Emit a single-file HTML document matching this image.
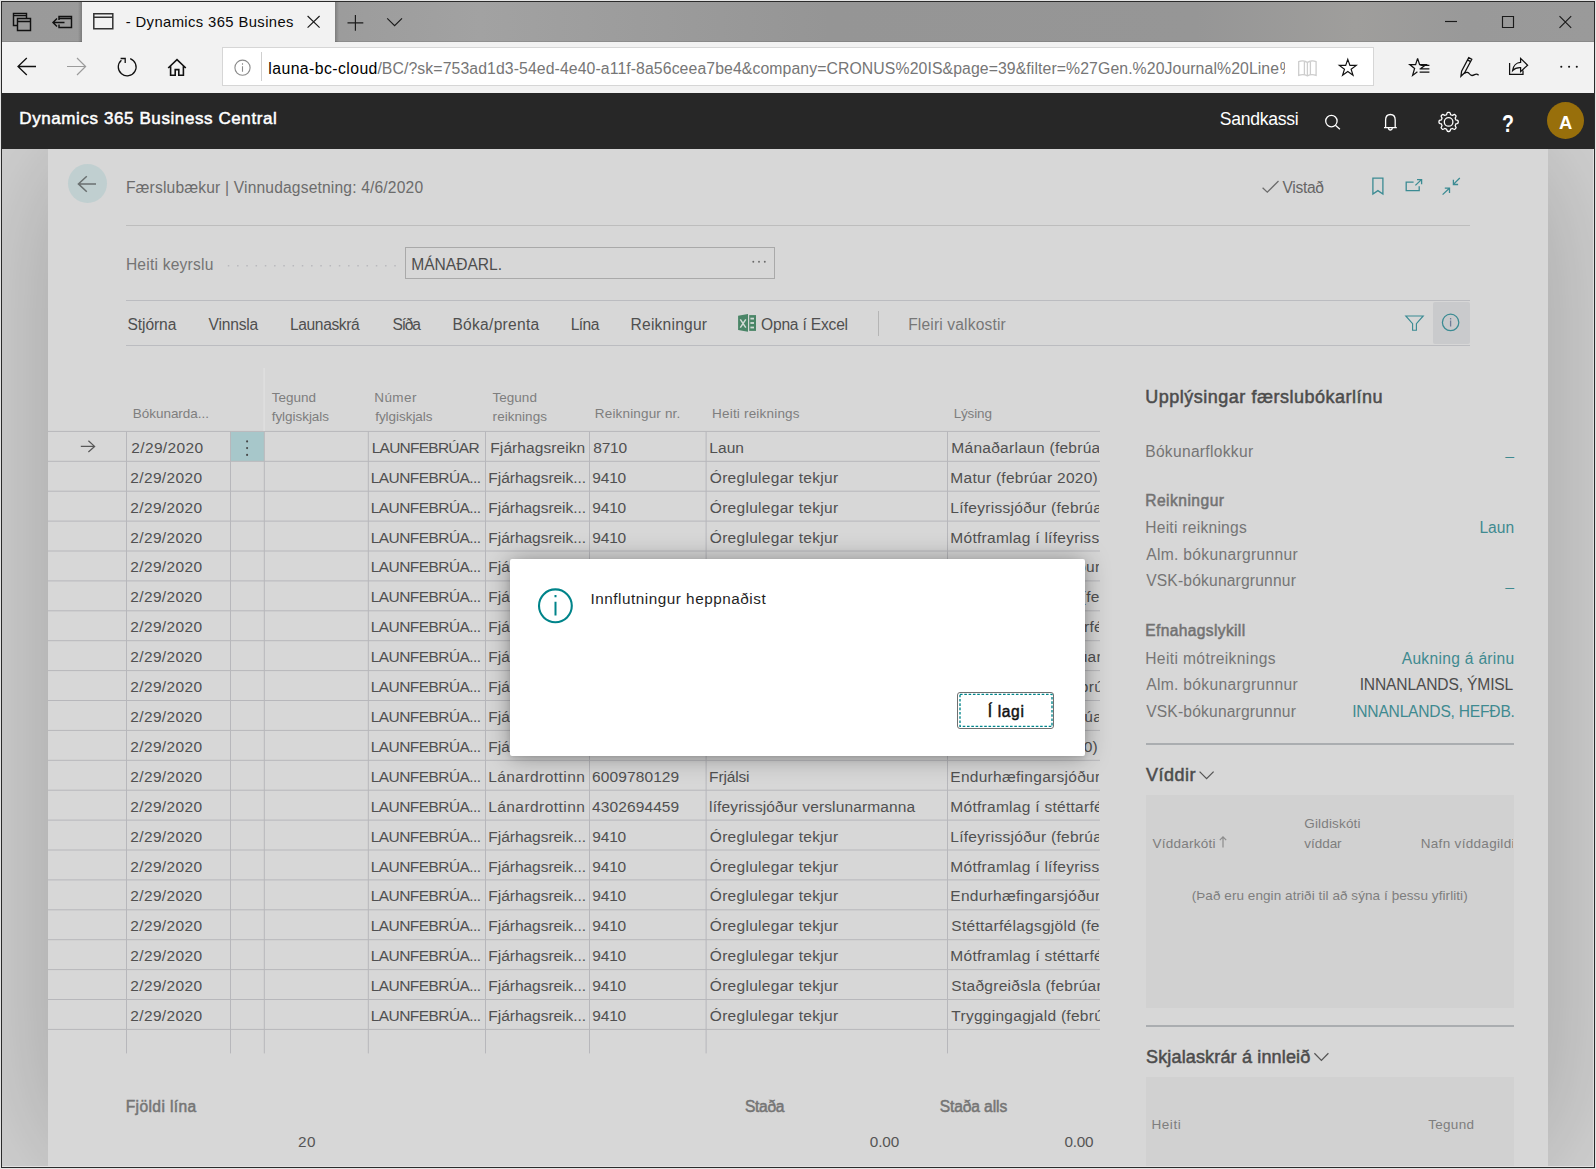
<!DOCTYPE html>
<html lang="is"><head><meta charset="utf-8"><title>Dynamics 365 Business Central</title>
<style>
html,body{margin:0;padding:0}
body{width:1596px;height:1169px;position:relative;overflow:hidden;background:#d7d7d7;font-family:"Liberation Sans",sans-serif;}
.t{position:absolute;white-space:nowrap;line-height:20px;}
.a{position:absolute}
svg{position:absolute;left:0;top:0;overflow:visible}

</style></head>
<body>
<!-- window frame + browser chrome -->
<div class="a" style="left:0;top:0;width:1596px;height:1169px;background:#e4e4e4"></div>
<div class="a" style="left:1px;top:1px;width:1594px;height:1167px;background:#2b2b2b"></div>
<div class="a" style="left:2px;top:2px;width:1592px;height:1165px;background:#d7d7d7"></div>
<div class="a" style="left:2px;top:2px;width:1592px;height:40px;background:linear-gradient(90deg,#9a9a9a 0,#9b9b9b 20%,#a2a2a2 30%,#9c9c9c 40%,#959595 52%,#969696 75%,#9f9e9c 85%,#999 92%,#9a9a9a 100%)"></div>
<div class="a" style="left:2px;top:41px;width:1592px;height:1px;background:rgba(0,0,0,.1)"></div>
<div class="a" style="left:78px;top:2px;width:4px;height:40px;background:linear-gradient(90deg,rgba(0,0,0,0),rgba(0,0,0,.2))"></div>
<div class="a" style="left:335px;top:2px;width:4px;height:40px;background:linear-gradient(90deg,rgba(0,0,0,.2),rgba(0,0,0,0))"></div>
<div class="a" style="left:82px;top:2px;width:253px;height:40px;background:#f2f2f2"></div>
<div class="a" style="left:2px;top:42px;width:1592px;height:51px;background:#f2f2f2"></div>
<div class="a" style="left:222px;top:47px;width:1150px;height:37px;background:#fff;border:1px solid #d6d6d6"></div>
<div class="a" style="left:261px;top:52px;width:1px;height:29px;background:#cfcfcf"></div>
<!-- BC header -->
<div class="a" style="left:2px;top:93px;width:1592px;height:56px;background:#272727"></div>
<div class="a" style="left:1547px;top:102px;width:37px;height:37px;border-radius:50%;background:#986f0b"></div>
<!-- page shadows -->
<div class="a" style="left:2px;top:149px;width:1591px;height:1017px;background:#d3d3d3;overflow:hidden"><div class="a" style="left:46px;top:0;width:1500px;height:1018px;background:#d7d7d7;box-shadow:0 0 140px rgba(0,0,0,.25)"></div></div>
<div class="a" style="left:1593px;top:149px;width:1px;height:1018px;background:#dedede"></div>
<div class="a" style="left:2px;top:1166px;width:1592px;height:1px;background:#e2e2e2"></div>
<!-- page furniture -->
<div class="a" style="left:68px;top:164px;width:39px;height:39px;border-radius:50%;background:#c0cfd0"></div>
<div class="a" style="left:126px;top:225px;width:1344px;height:1px;background:#bdbdbd"></div>
<div class="a" style="left:405px;top:247px;width:368px;height:30px;border:1px solid #a9a9a9"></div>
<div class="a" style="left:126px;top:300px;width:1344px;height:1px;background:#bbbcc0"></div>
<div class="a" style="left:126px;top:345px;width:1344px;height:1px;background:#bbbcc0"></div>
<div class="a" style="left:1433px;top:302px;width:37px;height:42px;background:#c9cacc;border-radius:2px"></div>
<div class="a" style="left:878px;top:311px;width:1px;height:25px;background:#b5b5b5"></div>
<!-- fact box panels -->
<div class="a" style="left:1146px;top:743px;width:368px;height:2px;background:#aaadb0"></div>
<div class="a" style="left:1146px;top:795px;width:368px;height:213px;background:#d1d1d1"></div>
<div class="a" style="left:1146px;top:1025px;width:368px;height:2px;background:#aaadb0"></div>
<div class="a" style="left:1146px;top:1077px;width:368px;height:89px;background:#d1d1d1"></div>
<!-- selected row more-button -->
<div class="a" style="left:231px;top:432px;width:33px;height:29px;background:#a7c7ca"></div>
<svg width="1596" height="1169" viewBox="0 0 1596 1169">
<rect x="48" y="430.90" width="1052" height="1" fill="#b7b7bb"/>
<rect x="48" y="460.80" width="1052" height="1" fill="#b7b7bb"/>
<rect x="48" y="490.70" width="1052" height="1" fill="#b7b7bb"/>
<rect x="48" y="520.60" width="1052" height="1" fill="#b7b7bb"/>
<rect x="48" y="550.50" width="1052" height="1" fill="#b7b7bb"/>
<rect x="48" y="580.40" width="1052" height="1" fill="#b7b7bb"/>
<rect x="48" y="610.30" width="1052" height="1" fill="#b7b7bb"/>
<rect x="48" y="640.20" width="1052" height="1" fill="#b7b7bb"/>
<rect x="48" y="670.10" width="1052" height="1" fill="#b7b7bb"/>
<rect x="48" y="700.00" width="1052" height="1" fill="#b7b7bb"/>
<rect x="48" y="729.90" width="1052" height="1" fill="#b7b7bb"/>
<rect x="48" y="759.80" width="1052" height="1" fill="#b7b7bb"/>
<rect x="48" y="789.70" width="1052" height="1" fill="#b7b7bb"/>
<rect x="48" y="819.60" width="1052" height="1" fill="#b7b7bb"/>
<rect x="48" y="849.50" width="1052" height="1" fill="#b7b7bb"/>
<rect x="48" y="879.40" width="1052" height="1" fill="#b7b7bb"/>
<rect x="48" y="909.30" width="1052" height="1" fill="#b7b7bb"/>
<rect x="48" y="939.20" width="1052" height="1" fill="#b7b7bb"/>
<rect x="48" y="969.10" width="1052" height="1" fill="#b7b7bb"/>
<rect x="48" y="999.00" width="1052" height="1" fill="#b7b7bb"/>
<rect x="48" y="1028.90" width="1052" height="1" fill="#b7b7bb"/>
<rect x="126.00" y="431.4" width="1" height="622" fill="#b7b7bb"/>
<rect x="230.00" y="431.4" width="1" height="622" fill="#b7b7bb"/>
<rect x="263.80" y="431.4" width="1" height="622" fill="#b7b7bb"/>
<rect x="367.80" y="431.4" width="1" height="622" fill="#b7b7bb"/>
<rect x="485.00" y="431.4" width="1" height="622" fill="#b7b7bb"/>
<rect x="589.00" y="431.4" width="1" height="622" fill="#b7b7bb"/>
<rect x="705.60" y="431.4" width="1" height="622" fill="#b7b7bb"/>
<rect x="947.00" y="431.4" width="1" height="622" fill="#b7b7bb"/>
<rect x="263.6" y="368" width="1" height="63" fill="#e3e3e3"/>
</svg>
<!-- dialog -->
<div class="a" style="left:510px;top:559px;width:575px;height:197px;background:#fff;border-radius:2px;box-shadow:0 1px 24px rgba(0,0,0,.36),0 2px 5px rgba(0,0,0,.12);z-index:5"></div>
<div class="a" style="left:957px;top:692px;width:95px;height:35px;border:1px solid #707070;border-radius:3px;background:#fff;z-index:5"></div>
<svg width="1596" height="1169" viewBox="0 0 1596 1169" fill="none" stroke-linecap="butt" stroke-linejoin="miter">
<!-- tab strip icons -->
<g stroke="#111" stroke-width="1.45">
<path d="M17.5 25.5H13.5V13.5H26.5V18.5M13.5 15.6H26.5"/>
<path d="M17.5 18.5H30.5V30.5H17.5ZM17.5 21.4H30.5"/>
<path d="M59 20V16.5H71.5V27.5H59V24.5M59 18.5H71.5M53 22.4H64.5M57 18.4L53 22.4L57 26.4"/>
</g>
<g stroke="#333" stroke-width="1.5"><path d="M93.8 13.8H112.8V28.8H93.8ZM93.8 17.3H112.8"/></g>
<g stroke="#1a1a1a" stroke-width="1.15">
<path d="M307.6 16L319.6 27.6M319.6 16L307.6 27.6"/>
<path d="M347.5 22.9H363.3M355.4 15V30.8"/>
<path d="M387.2 18.3L394.6 25.7L402 18.3"/>
<path d="M1445 21.5H1457"/>
<path d="M1502.5 16.5H1513.5V27.5H1502.5Z"/>
<path d="M1559.5 16.2L1571.2 27.8M1571.2 16.2L1559.5 27.8"/>
</g>
<!-- nav icons -->
<g stroke="#111" stroke-width="1.3">
<path d="M36 66.5H18M26.8 58L18 66.5L26.8 75"/>
<path d="M130.2 58.6A8.9 8.9 0 1 1 121.4 60.2M120.6 58.5H125.2V63.1" />
</g>
<g stroke="#9b9b9b" stroke-width="1.2"><path d="M67 66.5H85.6M77 58L85.6 66.5L77 75"/></g>
<g stroke="#111" stroke-width="1.6"><path d="M168.2 68L177 59.6L185.8 68M170.6 66V75.2H175.2V69.6H178.8V75.2H183.4V66"/></g>
<!-- address bar icons -->
<g stroke="#8a8a8a" stroke-width="1.1"><circle cx="242.5" cy="67.7" r="7.6"/><path d="M242.5 66.2V71.8M242.5 63.2V64.8"/></g>
<g stroke="#cdcdcd" stroke-width="1.3"><path d="M1307.4 62.6V75.6M1307.4 62.6C1305 60.6 1301 60.6 1298.7 61.6V75.4C1301 74.6 1305 74.6 1307.4 75.8C1309.8 74.6 1313.8 74.6 1316.1 75.4V61.6C1313.8 60.6 1309.8 60.6 1307.4 62.6M1304.4 61.2V74.6M1310.4 61.2V74.6"/></g>
<g stroke="#111" stroke-width="1.25" stroke-linejoin="miter">
<path d="M1347.8 58.6L1350.1 65.2H1357L1351.4 69.4L1353.5 76L1347.8 71.9L1342.1 76L1344.2 69.4L1338.6 65.2H1345.5Z" transform="translate(1347.8 67.6) scale(.92) translate(-1347.8 -67.6)"/>
<path d="M1417.6 58.4L1419.6 64.6H1426L1420.8 68.6M1417.6 58.4L1415.6 64.6H1409.8L1414.6 68.4L1412.6 75.4L1417.4 71.8M1420.4 65.4H1429.4M1419.6 68.8H1429.4M1419.6 72.2H1429.4"/>
<path d="M1468.7 57.6L1471.8 59.3L1464.6 72.8L1460.9 76.3L1461.6 71.1ZM1467.5 59.9L1470.6 61.6M1464.4 73.4C1466.6 71.6 1468.4 72.2 1469.6 74C1470.6 75.6 1472.6 75.8 1474.6 74.6C1476.2 73.7 1477.6 74.2 1478.6 75.2"/>
<path d="M1509.6 63V74.4H1523V70.6M1512.6 70.6C1513.2 65.6 1516.6 62.6 1520.6 62.4V58.4L1527.6 65.2L1520.6 71.6V67.6C1517 67.4 1514.6 68.4 1512.6 70.6Z"/>
</g>
<g fill="#111" stroke="none"><circle cx="1561.3" cy="66.8" r="1.05"/><circle cx="1569.1" cy="66.8" r="1.05"/><circle cx="1576.8" cy="66.8" r="1.05"/></g>
</svg>

<svg width="1596" height="1169" viewBox="0 0 1596 1169" fill="none" stroke-linecap="butt" stroke-linejoin="miter">
<!-- header icons -->
<g stroke="#fff" stroke-width="1.3">
<circle cx="1331.4" cy="121.1" r="5.7"/><path d="M1335.4 125.2L1339.9 129.2"/>
<path d="M1384 127.6H1396.8M1385.6 127.6V120C1385.6 116.6 1387.6 114.5 1390.4 114.5C1393.2 114.5 1395.2 116.6 1395.2 120V127.6M1388.4 127.8C1388.6 129.4 1389.4 130 1390.4 130C1391.4 130 1392.2 129.4 1392.4 127.8"/>
<circle cx="1448.6" cy="121.9" r="4.3"/>
<path d="M1448.6 112.3L1449.2 112.3L1449.8 112.5L1450.3 113.5L1450.6 114.6L1451.0 114.8L1451.5 115.0L1451.9 115.2L1452.4 115.3L1453.4 114.8L1454.4 114.4L1454.9 114.7L1455.4 115.1L1455.8 115.6L1456.1 116.1L1455.7 117.1L1455.2 118.1L1455.3 118.6L1455.5 119.0L1455.7 119.5L1455.9 119.9L1457.0 120.2L1458.0 120.7L1458.2 121.3L1458.2 121.9L1458.2 122.5L1458.0 123.1L1457.0 123.6L1455.9 123.9L1455.7 124.3L1455.5 124.8L1455.3 125.2L1455.2 125.7L1455.7 126.7L1456.1 127.7L1455.8 128.2L1455.4 128.7L1454.9 129.1L1454.4 129.4L1453.4 129.0L1452.4 128.5L1451.9 128.6L1451.5 128.8L1451.0 129.0L1450.6 129.2L1450.3 130.3L1449.8 131.3L1449.2 131.5L1448.6 131.5L1448.0 131.5L1447.4 131.3L1446.9 130.3L1446.6 129.2L1446.2 129.0L1445.7 128.8L1445.3 128.6L1444.8 128.5L1443.8 129.0L1442.8 129.4L1442.3 129.1L1441.8 128.7L1441.4 128.2L1441.1 127.7L1441.5 126.7L1442.0 125.7L1441.9 125.2L1441.7 124.8L1441.5 124.3L1441.3 123.9L1440.2 123.6L1439.2 123.1L1439.0 122.5L1439.0 121.9L1439.0 121.3L1439.2 120.7L1440.2 120.2L1441.3 119.9L1441.5 119.5L1441.7 119.0L1441.9 118.6L1442.0 118.1L1441.5 117.1L1441.1 116.1L1441.4 115.6L1441.8 115.1L1442.3 114.7L1442.8 114.4L1443.8 114.8L1444.8 115.3L1445.3 115.2L1445.7 115.0L1446.2 114.8L1446.6 114.6L1446.9 113.5L1447.4 112.5L1448.0 112.3Z" stroke-linejoin="round"/>
</g>
<!-- back arrow -->
<g stroke="#6a7070" stroke-width="1.5"><path d="M96 183.9H78.6M86.8 176.2L78.4 183.9L86.8 191.7"/></g>
<!-- saved check -->
<g stroke="#6c6c6c" stroke-width="1.25"><path d="M1262.6 187.7L1267.3 192.2L1278.5 181"/></g>
<!-- page actions (teal) -->
<g stroke="#3b8b93" stroke-width="1.3">
<path d="M1372.9 178.2H1382.9V194L1377.9 190.6L1372.9 194Z"/>
<path d="M1413.6 182.2H1406.2V190.7H1419.2V186.2M1415.4 185.4L1421.4 179.6M1417 179.6H1421.6V184.2"/>
<path d="M1459.8 178L1453.4 184.4M1453.4 179.8V184.5H1458.1M1442.6 194.6L1449.4 188.2M1444.8 188.1H1449.5V192.9"/>
<path d="M1405.8 316H1423.2L1416.4 323.6V330.2H1412.6V323.6Z" stroke-width="1.15"/>
<circle cx="1450.6" cy="322.4" r="8.2" stroke-width="1.25"/>
</g>
<g stroke="#6f7c96" stroke-width="1.3"><path d="M1450.6 320.6V326.4M1450.6 318V319.5"/></g>
<!-- excel -->
<path d="M738.1 315.7L748 314V331.8L738.1 330.1Z" fill="#4a8567"/>
<rect x="749.2" y="315.1" width="6.8" height="15.8" fill="#4a8567"/>
<g fill="#d3dbd6"><rect x="750.4" y="317.7" width="3.6" height="1.8"/><rect x="750.4" y="322.1" width="3.6" height="1.8"/><rect x="750.4" y="326.6" width="3.6" height="1.8"/></g>
<path d="M740.3 319.4L745.8 327.6M745.8 319.4L740.3 327.6" stroke="#d3dbd6" stroke-width="1.5"/>
<!-- field dots -->
<path d="M227.8 265.8H396" stroke="#b9b9bd" stroke-width="1.5" stroke-dasharray="1.5 7.75"/>
<g fill="#6a6a6a"><circle cx="753.3" cy="261.8" r="0.95"/><circle cx="759" cy="261.8" r="0.95"/><circle cx="764.8" cy="261.8" r="0.95"/></g>
<!-- row arrow + more -->
<g stroke="#585858" stroke-width="1.25"><path d="M80.8 446.4H94.6M88.4 440.8L94.6 446.4L88.4 452"/></g>
<g fill="#474747"><circle cx="247.1" cy="441.4" r="1.05"/><circle cx="247.1" cy="448.1" r="1.05"/><circle cx="247.1" cy="454.9" r="1.05"/></g>
<!-- chevrons, sort arrow -->
<g stroke="#555" stroke-width="1.25"><path d="M1199.6 771.6L1206.6 778.7L1213.6 771.6"/><path d="M1314.4 1053.3L1321.4 1060.4L1328.4 1053.3"/></g>
<g stroke="#8c8c8c" stroke-width="1.2"><path d="M1223 847.6V836.8M1219.8 840.2L1223 836.8L1226.2 840.2"/></g>
</svg>
<svg width="1596" height="1169" viewBox="0 0 1596 1169" fill="none" style="z-index:6">
<circle cx="555.4" cy="605.8" r="16.4" stroke="#00848a" stroke-width="2.1"/>
<path d="M555.5 601.8V615.6M555.5 594.9V597.2" stroke="#00848a" stroke-width="2"/>
<rect x="960" y="694.4" width="92" height="32" stroke="#00848a" stroke-width="1.35" stroke-dasharray="2.6 1.7"/>
</svg>


<!-- text -->
<span class="t" id="t0" style="top:12.00px;font-size:14.8px;color:#0a0a0a;letter-spacing:0.393px;left:125.70px;">- Dynamics 365 Busines</span>
<span class="t" id="t1" style="top:59.00px;font-size:15.8px;color:#000;letter-spacing:0.420px;left:268.30px;">launa-bc-cloud</span>
<span class="t" id="t2" style="top:59.00px;font-size:15.8px;color:#767676;letter-spacing:0.094px;left:377.40px;">/BC/?sk=753ad1d3-54ed-4e40-a11f-8a56ceea7be4&amp;company=CRONUS%20IS&amp;page=39&amp;filter=%27Gen.%20Journal%20Line</span>
<span class="t" id="t3" style="top:59.00px;font-size:15.8px;color:#767676;left:1279.80px;width:5.70px;overflow:hidden;">%27</span>
<span class="t" id="t4" style="top:109.00px;font-size:17px;color:#fff;-webkit-text-stroke:0.5px #fff;letter-spacing:0.591px;left:19.30px;">Dynamics 365 Business Central</span>
<span class="t" id="t5" style="top:109.00px;font-size:17.6px;color:#fff;letter-spacing:-0.283px;left:1219.80px;">Sandkassi</span>
<span class="t" id="t6" style="top:114.00px;font-size:24.5px;color:#fff;font-weight:700;left:1502.40px;transform:scaleX(.8);transform-origin:0 0;">?</span>
<span class="t" id="t7" style="top:113.00px;font-size:18.4px;color:#fff;font-weight:700;left:1559.10px;">A</span>
<span class="t" id="t8" style="top:178.00px;font-size:15.6px;color:#6c6c6c;letter-spacing:0.170px;left:125.90px;">Færslubækur | Vinnudagsetning: 4/6/2020</span>
<span class="t" id="t9" style="top:178.00px;font-size:15.6px;color:#666;letter-spacing:-0.297px;left:1282.40px;">Vistað</span>
<span class="t" id="t10" style="top:255.00px;font-size:15.6px;color:#747474;letter-spacing:0.213px;left:125.90px;">Heiti keyrslu</span>
<span class="t" id="t11" style="top:255.00px;font-size:15.6px;color:#4e4e4e;letter-spacing:-0.006px;left:411.20px;">MÁNAÐARL.</span>
<span class="t" id="t12" style="top:315.00px;font-size:15.6px;color:#4f4f4f;letter-spacing:-0.089px;left:127.50px;">Stjórna</span>
<span class="t" id="t13" style="top:315.00px;font-size:15.6px;color:#4f4f4f;letter-spacing:-0.182px;left:208.50px;">Vinnsla</span>
<span class="t" id="t14" style="top:315.00px;font-size:15.6px;color:#4f4f4f;letter-spacing:-0.381px;left:290.00px;">Launaskrá</span>
<span class="t" id="t15" style="top:315.00px;font-size:15.6px;color:#4f4f4f;letter-spacing:-1.202px;left:392.50px;">Síða</span>
<span class="t" id="t16" style="top:315.00px;font-size:15.6px;color:#4f4f4f;letter-spacing:0.278px;left:452.40px;">Bóka/prenta</span>
<span class="t" id="t17" style="top:315.00px;font-size:15.6px;color:#4f4f4f;letter-spacing:-0.559px;left:570.70px;">Lína</span>
<span class="t" id="t18" style="top:315.00px;font-size:15.6px;color:#4f4f4f;letter-spacing:0.206px;left:630.60px;">Reikningur</span>
<span class="t" id="t19" style="top:315.00px;font-size:15.6px;color:#4f4f4f;letter-spacing:-0.201px;left:761.00px;">Opna í Excel</span>
<span class="t" id="t20" style="top:315.00px;font-size:15.6px;color:#777;letter-spacing:0.146px;left:908.20px;">Fleiri valkostir</span>
<span class="t" id="t21" style="top:404.00px;font-size:13.5px;color:#7e7e7e;letter-spacing:-0.036px;left:132.80px;">Bókunarda...</span>
<span class="t" id="t22" style="top:388.00px;font-size:13.5px;color:#7e7e7e;left:271.70px;">Tegund</span>
<span class="t" id="t23" style="top:407.00px;font-size:13.5px;color:#7e7e7e;letter-spacing:-0.041px;left:271.70px;">fylgiskjals</span>
<span class="t" id="t24" style="top:388.00px;font-size:13.5px;color:#7e7e7e;letter-spacing:0.447px;left:374.20px;">Númer</span>
<span class="t" id="t25" style="top:407.00px;font-size:13.5px;color:#7e7e7e;letter-spacing:-0.041px;left:375.20px;">fylgiskjals</span>
<span class="t" id="t26" style="top:388.00px;font-size:13.5px;color:#7e7e7e;left:492.60px;">Tegund</span>
<span class="t" id="t27" style="top:407.00px;font-size:13.5px;color:#7e7e7e;letter-spacing:0.040px;left:492.60px;">reiknings</span>
<span class="t" id="t28" style="top:404.00px;font-size:13.5px;color:#7e7e7e;letter-spacing:0.166px;left:594.80px;">Reikningur nr.</span>
<span class="t" id="t29" style="top:404.00px;font-size:13.5px;color:#7e7e7e;letter-spacing:0.190px;left:712.10px;">Heiti reiknings</span>
<span class="t" id="t30" style="top:404.00px;font-size:13.5px;color:#7e7e7e;letter-spacing:-0.163px;left:953.70px;">Lýsing</span>
<span class="t" id="t31" style="top:438.00px;font-size:15.5px;color:#505050;letter-spacing:0.346px;left:131.30px;">2/29/2020</span>
<span class="t" id="t32" style="top:438.00px;font-size:15.5px;color:#505050;letter-spacing:-0.752px;left:371.70px;">LAUNFEBRÚAR</span>
<span class="t" id="t33" style="top:438.00px;font-size:15.5px;color:#505050;letter-spacing:0.085px;left:490.30px;">Fjárhagsreikn</span>
<span class="t" id="t34" style="top:438.00px;font-size:15.5px;color:#505050;letter-spacing:-0.254px;left:593.30px;">8710</span>
<span class="t" id="t35" style="top:438.00px;font-size:15.5px;color:#505050;letter-spacing:0.046px;left:709.30px;">Laun</span>
<span class="t" id="t36" style="top:438.00px;font-size:15.5px;color:#505050;left:951.30px;width:147.70px;overflow:hidden;letter-spacing:0.28px;">Mánaðarlaun (febrúar 2020)</span>
<span class="t" id="t37" style="top:468.00px;font-size:15.5px;color:#505050;letter-spacing:0.346px;left:130.30px;">2/29/2020</span>
<span class="t" id="t38" style="top:468.00px;font-size:15.5px;color:#505050;letter-spacing:-0.561px;left:370.70px;">LAUNFEBRÚA...</span>
<span class="t" id="t39" style="top:468.00px;font-size:15.5px;color:#505050;letter-spacing:-0.028px;left:488.30px;">Fjárhagsreik...</span>
<span class="t" id="t40" style="top:468.00px;font-size:15.5px;color:#505050;letter-spacing:-0.187px;left:592.30px;">9410</span>
<span class="t" id="t41" style="top:468.00px;font-size:15.5px;color:#505050;letter-spacing:0.298px;left:709.80px;">Óreglulegar tekjur</span>
<span class="t" id="t42" style="top:468.00px;font-size:15.5px;color:#505050;left:950.30px;width:148.70px;overflow:hidden;letter-spacing:0.28px;">Matur (febrúar 2020)</span>
<span class="t" id="t43" style="top:498.00px;font-size:15.5px;color:#505050;letter-spacing:0.346px;left:130.30px;">2/29/2020</span>
<span class="t" id="t44" style="top:498.00px;font-size:15.5px;color:#505050;letter-spacing:-0.561px;left:370.70px;">LAUNFEBRÚA...</span>
<span class="t" id="t45" style="top:498.00px;font-size:15.5px;color:#505050;letter-spacing:-0.028px;left:488.30px;">Fjárhagsreik...</span>
<span class="t" id="t46" style="top:498.00px;font-size:15.5px;color:#505050;letter-spacing:-0.187px;left:592.30px;">9410</span>
<span class="t" id="t47" style="top:498.00px;font-size:15.5px;color:#505050;letter-spacing:0.298px;left:709.80px;">Óreglulegar tekjur</span>
<span class="t" id="t48" style="top:498.00px;font-size:15.5px;color:#505050;left:950.30px;width:148.70px;overflow:hidden;letter-spacing:0.28px;">Lífeyrissjóður (febrúar 2020)</span>
<span class="t" id="t49" style="top:528.00px;font-size:15.5px;color:#505050;letter-spacing:0.346px;left:130.30px;">2/29/2020</span>
<span class="t" id="t50" style="top:528.00px;font-size:15.5px;color:#505050;letter-spacing:-0.561px;left:370.70px;">LAUNFEBRÚA...</span>
<span class="t" id="t51" style="top:528.00px;font-size:15.5px;color:#505050;letter-spacing:-0.028px;left:488.30px;">Fjárhagsreik...</span>
<span class="t" id="t52" style="top:528.00px;font-size:15.5px;color:#505050;letter-spacing:-0.187px;left:592.30px;">9410</span>
<span class="t" id="t53" style="top:528.00px;font-size:15.5px;color:#505050;letter-spacing:0.298px;left:709.80px;">Óreglulegar tekjur</span>
<span class="t" id="t54" style="top:528.00px;font-size:15.5px;color:#505050;left:950.30px;width:148.70px;overflow:hidden;letter-spacing:0.28px;">Mótframlag í lífeyrissjóð</span>
<span class="t" id="t55" style="top:557.00px;font-size:15.5px;color:#505050;letter-spacing:0.346px;left:130.30px;">2/29/2020</span>
<span class="t" id="t56" style="top:557.00px;font-size:15.5px;color:#505050;letter-spacing:-0.561px;left:370.70px;">LAUNFEBRÚA...</span>
<span class="t" id="t57" style="top:557.00px;font-size:15.5px;color:#505050;letter-spacing:-0.028px;left:488.30px;">Fjárhagsreik...</span>
<span class="t" id="t58" style="top:557.00px;font-size:15.5px;color:#505050;letter-spacing:-0.187px;left:592.30px;">9410</span>
<span class="t" id="t59" style="top:557.00px;font-size:15.5px;color:#505050;letter-spacing:0.298px;left:709.80px;">Óreglulegar tekjur</span>
<span class="t" id="t60" style="top:557.00px;font-size:15.5px;color:#505050;left:950.30px;width:148.70px;overflow:hidden;letter-spacing:0.28px;">Endurhæfingarsjóður</span>
<span class="t" id="t61" style="top:587.00px;font-size:15.5px;color:#505050;letter-spacing:0.346px;left:130.30px;">2/29/2020</span>
<span class="t" id="t62" style="top:587.00px;font-size:15.5px;color:#505050;letter-spacing:-0.561px;left:370.70px;">LAUNFEBRÚA...</span>
<span class="t" id="t63" style="top:587.00px;font-size:15.5px;color:#505050;letter-spacing:-0.028px;left:488.30px;">Fjárhagsreik...</span>
<span class="t" id="t64" style="top:587.00px;font-size:15.5px;color:#505050;letter-spacing:-0.187px;left:592.30px;">9410</span>
<span class="t" id="t65" style="top:587.00px;font-size:15.5px;color:#505050;letter-spacing:0.298px;left:709.80px;">Óreglulegar tekjur</span>
<span class="t" id="t66" style="top:587.00px;font-size:15.5px;color:#505050;left:951.30px;width:148.70px;overflow:hidden;letter-spacing:0.28px;">Stéttarfélagsgjöld (febrúar 2020)</span>
<span class="t" id="t67" style="top:617.00px;font-size:15.5px;color:#505050;letter-spacing:0.346px;left:130.30px;">2/29/2020</span>
<span class="t" id="t68" style="top:617.00px;font-size:15.5px;color:#505050;letter-spacing:-0.561px;left:370.70px;">LAUNFEBRÚA...</span>
<span class="t" id="t69" style="top:617.00px;font-size:15.5px;color:#505050;letter-spacing:-0.028px;left:488.30px;">Fjárhagsreik...</span>
<span class="t" id="t70" style="top:617.00px;font-size:15.5px;color:#505050;letter-spacing:-0.187px;left:592.30px;">9410</span>
<span class="t" id="t71" style="top:617.00px;font-size:15.5px;color:#505050;letter-spacing:0.298px;left:709.80px;">Óreglulegar tekjur</span>
<span class="t" id="t72" style="top:617.00px;font-size:15.5px;color:#505050;left:950.30px;width:148.70px;overflow:hidden;letter-spacing:0.28px;">Mótframlag í stéttarfélag</span>
<span class="t" id="t73" style="top:647.00px;font-size:15.5px;color:#505050;letter-spacing:0.346px;left:130.30px;">2/29/2020</span>
<span class="t" id="t74" style="top:647.00px;font-size:15.5px;color:#505050;letter-spacing:-0.561px;left:370.70px;">LAUNFEBRÚA...</span>
<span class="t" id="t75" style="top:647.00px;font-size:15.5px;color:#505050;letter-spacing:-0.028px;left:488.30px;">Fjárhagsreik...</span>
<span class="t" id="t76" style="top:647.00px;font-size:15.5px;color:#505050;letter-spacing:-0.187px;left:592.30px;">9410</span>
<span class="t" id="t77" style="top:647.00px;font-size:15.5px;color:#505050;letter-spacing:0.298px;left:709.80px;">Óreglulegar tekjur</span>
<span class="t" id="t78" style="top:647.00px;font-size:15.5px;color:#505050;left:951.30px;width:148.70px;overflow:hidden;letter-spacing:0.28px;">Staðgreiðsla (febrúar</span>
<span class="t" id="t79" style="top:677.00px;font-size:15.5px;color:#505050;letter-spacing:0.346px;left:130.30px;">2/29/2020</span>
<span class="t" id="t80" style="top:677.00px;font-size:15.5px;color:#505050;letter-spacing:-0.561px;left:370.70px;">LAUNFEBRÚA...</span>
<span class="t" id="t81" style="top:677.00px;font-size:15.5px;color:#505050;letter-spacing:-0.028px;left:488.30px;">Fjárhagsreik...</span>
<span class="t" id="t82" style="top:677.00px;font-size:15.5px;color:#505050;letter-spacing:-0.187px;left:592.30px;">9410</span>
<span class="t" id="t83" style="top:677.00px;font-size:15.5px;color:#505050;letter-spacing:0.298px;left:709.80px;">Óreglulegar tekjur</span>
<span class="t" id="t84" style="top:677.00px;font-size:15.5px;color:#505050;left:951.30px;width:148.70px;overflow:hidden;letter-spacing:0.28px;">Tryggingagjald (febrúar 2020)</span>
<span class="t" id="t85" style="top:707.00px;font-size:15.5px;color:#505050;letter-spacing:0.346px;left:130.30px;">2/29/2020</span>
<span class="t" id="t86" style="top:707.00px;font-size:15.5px;color:#505050;letter-spacing:-0.561px;left:370.70px;">LAUNFEBRÚA...</span>
<span class="t" id="t87" style="top:707.00px;font-size:15.5px;color:#505050;letter-spacing:-0.028px;left:488.30px;">Fjárhagsreik...</span>
<span class="t" id="t88" style="top:707.00px;font-size:15.5px;color:#505050;letter-spacing:-0.187px;left:592.30px;">9410</span>
<span class="t" id="t89" style="top:707.00px;font-size:15.5px;color:#505050;letter-spacing:0.298px;left:709.80px;">Óreglulegar tekjur</span>
<span class="t" id="t90" style="top:707.00px;font-size:15.5px;color:#505050;left:950.30px;width:148.70px;overflow:hidden;letter-spacing:0.28px;">Lífeyrissjóður (febrúar 2020)</span>
<span class="t" id="t91" style="top:737.00px;font-size:15.5px;color:#505050;letter-spacing:0.346px;left:130.30px;">2/29/2020</span>
<span class="t" id="t92" style="top:737.00px;font-size:15.5px;color:#505050;letter-spacing:-0.561px;left:370.70px;">LAUNFEBRÚA...</span>
<span class="t" id="t93" style="top:737.00px;font-size:15.5px;color:#505050;letter-spacing:-0.028px;left:488.30px;">Fjárhagsreik...</span>
<span class="t" id="t94" style="top:737.00px;font-size:15.5px;color:#505050;letter-spacing:-0.187px;left:592.30px;">9410</span>
<span class="t" id="t95" style="top:737.00px;font-size:15.5px;color:#505050;letter-spacing:0.298px;left:709.80px;">Óreglulegar tekjur</span>
<span class="t" id="t96" style="top:737.00px;font-size:15.5px;color:#505050;left:950.30px;width:148.70px;overflow:hidden;letter-spacing:0.28px;">Matur (febrúar 2020)</span>
<span class="t" id="t97" style="top:767.00px;font-size:15.5px;color:#505050;letter-spacing:0.346px;left:130.30px;">2/29/2020</span>
<span class="t" id="t98" style="top:767.00px;font-size:15.5px;color:#505050;letter-spacing:-0.561px;left:370.70px;">LAUNFEBRÚA...</span>
<span class="t" id="t99" style="top:767.00px;font-size:15.5px;color:#505050;letter-spacing:0.440px;left:488.20px;">Lánardrottinn</span>
<span class="t" id="t100" style="top:767.00px;font-size:15.5px;color:#505050;letter-spacing:0.102px;left:592.10px;">6009780129</span>
<span class="t" id="t101" style="top:767.00px;font-size:15.5px;color:#505050;letter-spacing:-0.148px;left:709.10px;">Frjálsi</span>
<span class="t" id="t102" style="top:767.00px;font-size:15.5px;color:#505050;left:950.30px;width:148.70px;overflow:hidden;letter-spacing:0.28px;">Endurhæfingarsjóður</span>
<span class="t" id="t103" style="top:797.00px;font-size:15.5px;color:#505050;letter-spacing:0.346px;left:130.30px;">2/29/2020</span>
<span class="t" id="t104" style="top:797.00px;font-size:15.5px;color:#505050;letter-spacing:-0.561px;left:370.70px;">LAUNFEBRÚA...</span>
<span class="t" id="t105" style="top:797.00px;font-size:15.5px;color:#505050;letter-spacing:0.440px;left:488.20px;">Lánardrottinn</span>
<span class="t" id="t106" style="top:797.00px;font-size:15.5px;color:#505050;letter-spacing:0.102px;left:592.10px;">4302694459</span>
<span class="t" id="t107" style="top:797.00px;font-size:15.5px;color:#505050;letter-spacing:0.128px;left:709.10px;">lífeyrissjóður verslunarmanna</span>
<span class="t" id="t108" style="top:797.00px;font-size:15.5px;color:#505050;left:950.30px;width:148.70px;overflow:hidden;letter-spacing:0.28px;">Mótframlag í stéttarfélag</span>
<span class="t" id="t109" style="top:827.00px;font-size:15.5px;color:#505050;letter-spacing:0.346px;left:130.30px;">2/29/2020</span>
<span class="t" id="t110" style="top:827.00px;font-size:15.5px;color:#505050;letter-spacing:-0.561px;left:370.70px;">LAUNFEBRÚA...</span>
<span class="t" id="t111" style="top:827.00px;font-size:15.5px;color:#505050;letter-spacing:-0.028px;left:488.30px;">Fjárhagsreik...</span>
<span class="t" id="t112" style="top:827.00px;font-size:15.5px;color:#505050;letter-spacing:-0.187px;left:592.30px;">9410</span>
<span class="t" id="t113" style="top:827.00px;font-size:15.5px;color:#505050;letter-spacing:0.298px;left:709.80px;">Óreglulegar tekjur</span>
<span class="t" id="t114" style="top:827.00px;font-size:15.5px;color:#505050;left:950.30px;width:148.70px;overflow:hidden;letter-spacing:0.28px;">Lífeyrissjóður (febrúar 2020)</span>
<span class="t" id="t115" style="top:857.00px;font-size:15.5px;color:#505050;letter-spacing:0.346px;left:130.30px;">2/29/2020</span>
<span class="t" id="t116" style="top:857.00px;font-size:15.5px;color:#505050;letter-spacing:-0.561px;left:370.70px;">LAUNFEBRÚA...</span>
<span class="t" id="t117" style="top:857.00px;font-size:15.5px;color:#505050;letter-spacing:-0.028px;left:488.30px;">Fjárhagsreik...</span>
<span class="t" id="t118" style="top:857.00px;font-size:15.5px;color:#505050;letter-spacing:-0.187px;left:592.30px;">9410</span>
<span class="t" id="t119" style="top:857.00px;font-size:15.5px;color:#505050;letter-spacing:0.298px;left:709.80px;">Óreglulegar tekjur</span>
<span class="t" id="t120" style="top:857.00px;font-size:15.5px;color:#505050;left:950.30px;width:148.70px;overflow:hidden;letter-spacing:0.28px;">Mótframlag í lífeyrissjóð</span>
<span class="t" id="t121" style="top:886.00px;font-size:15.5px;color:#505050;letter-spacing:0.346px;left:130.30px;">2/29/2020</span>
<span class="t" id="t122" style="top:886.00px;font-size:15.5px;color:#505050;letter-spacing:-0.561px;left:370.70px;">LAUNFEBRÚA...</span>
<span class="t" id="t123" style="top:886.00px;font-size:15.5px;color:#505050;letter-spacing:-0.028px;left:488.30px;">Fjárhagsreik...</span>
<span class="t" id="t124" style="top:886.00px;font-size:15.5px;color:#505050;letter-spacing:-0.187px;left:592.30px;">9410</span>
<span class="t" id="t125" style="top:886.00px;font-size:15.5px;color:#505050;letter-spacing:0.298px;left:709.80px;">Óreglulegar tekjur</span>
<span class="t" id="t126" style="top:886.00px;font-size:15.5px;color:#505050;left:950.30px;width:148.70px;overflow:hidden;letter-spacing:0.28px;">Endurhæfingarsjóður</span>
<span class="t" id="t127" style="top:916.00px;font-size:15.5px;color:#505050;letter-spacing:0.346px;left:130.30px;">2/29/2020</span>
<span class="t" id="t128" style="top:916.00px;font-size:15.5px;color:#505050;letter-spacing:-0.561px;left:370.70px;">LAUNFEBRÚA...</span>
<span class="t" id="t129" style="top:916.00px;font-size:15.5px;color:#505050;letter-spacing:-0.028px;left:488.30px;">Fjárhagsreik...</span>
<span class="t" id="t130" style="top:916.00px;font-size:15.5px;color:#505050;letter-spacing:-0.187px;left:592.30px;">9410</span>
<span class="t" id="t131" style="top:916.00px;font-size:15.5px;color:#505050;letter-spacing:0.298px;left:709.80px;">Óreglulegar tekjur</span>
<span class="t" id="t132" style="top:916.00px;font-size:15.5px;color:#505050;left:951.30px;width:148.70px;overflow:hidden;letter-spacing:0.28px;">Stéttarfélagsgjöld (febrúar 2020)</span>
<span class="t" id="t133" style="top:946.00px;font-size:15.5px;color:#505050;letter-spacing:0.346px;left:130.30px;">2/29/2020</span>
<span class="t" id="t134" style="top:946.00px;font-size:15.5px;color:#505050;letter-spacing:-0.561px;left:370.70px;">LAUNFEBRÚA...</span>
<span class="t" id="t135" style="top:946.00px;font-size:15.5px;color:#505050;letter-spacing:-0.028px;left:488.30px;">Fjárhagsreik...</span>
<span class="t" id="t136" style="top:946.00px;font-size:15.5px;color:#505050;letter-spacing:-0.187px;left:592.30px;">9410</span>
<span class="t" id="t137" style="top:946.00px;font-size:15.5px;color:#505050;letter-spacing:0.298px;left:709.80px;">Óreglulegar tekjur</span>
<span class="t" id="t138" style="top:946.00px;font-size:15.5px;color:#505050;left:950.30px;width:148.70px;overflow:hidden;letter-spacing:0.28px;">Mótframlag í stéttarfélag</span>
<span class="t" id="t139" style="top:976.00px;font-size:15.5px;color:#505050;letter-spacing:0.346px;left:130.30px;">2/29/2020</span>
<span class="t" id="t140" style="top:976.00px;font-size:15.5px;color:#505050;letter-spacing:-0.561px;left:370.70px;">LAUNFEBRÚA...</span>
<span class="t" id="t141" style="top:976.00px;font-size:15.5px;color:#505050;letter-spacing:-0.028px;left:488.30px;">Fjárhagsreik...</span>
<span class="t" id="t142" style="top:976.00px;font-size:15.5px;color:#505050;letter-spacing:-0.187px;left:592.30px;">9410</span>
<span class="t" id="t143" style="top:976.00px;font-size:15.5px;color:#505050;letter-spacing:0.298px;left:709.80px;">Óreglulegar tekjur</span>
<span class="t" id="t144" style="top:976.00px;font-size:15.5px;color:#505050;left:951.30px;width:148.70px;overflow:hidden;letter-spacing:0.28px;">Staðgreiðsla (febrúar</span>
<span class="t" id="t145" style="top:1006.00px;font-size:15.5px;color:#505050;letter-spacing:0.346px;left:130.30px;">2/29/2020</span>
<span class="t" id="t146" style="top:1006.00px;font-size:15.5px;color:#505050;letter-spacing:-0.561px;left:370.70px;">LAUNFEBRÚA...</span>
<span class="t" id="t147" style="top:1006.00px;font-size:15.5px;color:#505050;letter-spacing:-0.028px;left:488.30px;">Fjárhagsreik...</span>
<span class="t" id="t148" style="top:1006.00px;font-size:15.5px;color:#505050;letter-spacing:-0.187px;left:592.30px;">9410</span>
<span class="t" id="t149" style="top:1006.00px;font-size:15.5px;color:#505050;letter-spacing:0.298px;left:709.80px;">Óreglulegar tekjur</span>
<span class="t" id="t150" style="top:1006.00px;font-size:15.5px;color:#505050;left:951.30px;width:148.70px;overflow:hidden;letter-spacing:0.28px;">Tryggingagjald (febrúar 2020)</span>
<span class="t" id="t151" style="top:1097.00px;font-size:15.6px;color:#757575;-webkit-text-stroke:0.5px #757575;letter-spacing:0.383px;left:125.70px;">Fjöldi lína</span>
<span class="t" id="t152" style="top:1097.00px;font-size:15.6px;color:#757575;-webkit-text-stroke:0.5px #757575;letter-spacing:-0.320px;left:745.00px;">Staða</span>
<span class="t" id="t153" style="top:1097.00px;font-size:15.6px;color:#757575;-webkit-text-stroke:0.5px #757575;letter-spacing:-0.109px;left:939.70px;">Staða alls</span>
<span class="t" id="t154" style="top:1132.00px;font-size:15.3px;color:#555;letter-spacing:0.393px;left:298.10px;">20</span>
<span class="t" id="t155" style="top:1132.00px;font-size:15.3px;color:#555;letter-spacing:-0.122px;left:869.80px;">0.00</span>
<span class="t" id="t156" style="top:1132.00px;font-size:15.3px;color:#555;letter-spacing:-0.222px;left:1064.50px;">0.00</span>
<span class="t" id="t157" style="top:387.00px;font-size:18px;color:#4c4c4c;-webkit-text-stroke:0.5px #4c4c4c;letter-spacing:0.512px;left:1145.20px;">Upplýsingar færslubókarlínu</span>
<span class="t" id="t158" style="top:442.00px;font-size:15.6px;color:#757575;letter-spacing:0.299px;left:1145.20px;">Bókunarflokkur</span>
<span class="t" id="t159" style="top:440.00px;font-size:15.2px;color:#3f8a90;left:1505.40px;">_</span>
<span class="t" id="t160" style="top:491.00px;font-size:15.6px;color:#727272;-webkit-text-stroke:0.5px #727272;letter-spacing:0.472px;left:1145.20px;">Reikningur</span>
<span class="t" id="t161" style="top:518.00px;font-size:15.6px;color:#757575;letter-spacing:0.262px;left:1145.20px;">Heiti reiknings</span>
<span class="t" id="t162" style="top:518.00px;font-size:15.6px;color:#3f8a90;letter-spacing:0.061px;left:1479.40px;">Laun</span>
<span class="t" id="t163" style="top:545.00px;font-size:15.6px;color:#757575;letter-spacing:0.321px;left:1146.20px;">Alm. bókunargrunnur</span>
<span class="t" id="t164" style="top:571.00px;font-size:15.6px;color:#757575;letter-spacing:0.188px;left:1146.20px;">VSK-bókunargrunnur</span>
<span class="t" id="t165" style="top:571.00px;font-size:15.2px;color:#3f8a90;left:1505.40px;">_</span>
<span class="t" id="t166" style="top:621.00px;font-size:15.6px;color:#727272;-webkit-text-stroke:0.5px #727272;letter-spacing:0.355px;left:1145.20px;">Efnahagslykill</span>
<span class="t" id="t167" style="top:649.00px;font-size:15.6px;color:#757575;letter-spacing:0.381px;left:1145.20px;">Heiti mótreiknings</span>
<span class="t" id="t168" style="top:649.00px;font-size:15.6px;color:#3f8a90;letter-spacing:0.301px;left:1401.70px;">Aukning á árinu</span>
<span class="t" id="t169" style="top:675.00px;font-size:15.6px;color:#757575;letter-spacing:0.321px;left:1146.20px;">Alm. bókunargrunnur</span>
<span class="t" id="t170" style="top:675.00px;font-size:15.6px;color:#4c4c4c;letter-spacing:-0.150px;left:1359.70px;">INNANLANDS, ÝMISL</span>
<span class="t" id="t171" style="top:702.00px;font-size:15.6px;color:#757575;letter-spacing:0.188px;left:1146.20px;">VSK-bókunargrunnur</span>
<span class="t" id="t172" style="top:702.00px;font-size:15.6px;color:#3f8a90;letter-spacing:-0.213px;left:1352.20px;">INNANLANDS, HEFÐB.</span>
<span class="t" id="t173" style="top:765.00px;font-size:18px;color:#4c4c4c;-webkit-text-stroke:0.5px #4c4c4c;letter-spacing:0.515px;left:1146.00px;">Víddir</span>
<span class="t" id="t174" style="top:834.00px;font-size:13.5px;color:#7e7e7e;letter-spacing:0.257px;left:1152.50px;">Víddarkóti</span>
<span class="t" id="t175" style="top:814.00px;font-size:13.5px;color:#7e7e7e;letter-spacing:0.159px;left:1304.30px;">Gildiskóti</span>
<span class="t" id="t176" style="top:834.00px;font-size:13.5px;color:#7e7e7e;letter-spacing:-0.045px;left:1304.30px;">víddar</span>
<span class="t" id="t177" style="top:834.00px;font-size:13.5px;color:#7e7e7e;letter-spacing:0.321px;left:1420.70px;width:92.10px;overflow:hidden;">Nafn víddagildi</span>
<span class="t" id="t178" style="top:886.00px;font-size:13.5px;color:#7e7e7e;letter-spacing:0.072px;left:1191.70px;">(Það eru engin atriði til að sýna í þessu yfirliti)</span>
<span class="t" id="t179" style="top:1047.00px;font-size:18px;color:#4c4c4c;-webkit-text-stroke:0.5px #4c4c4c;letter-spacing:0.157px;left:1146.00px;">Skjalaskrár á innleið</span>
<span class="t" id="t180" style="top:1115.00px;font-size:13.5px;color:#7e7e7e;letter-spacing:0.548px;left:1151.50px;">Heiti</span>
<span class="t" id="t181" style="top:1115.00px;font-size:13.5px;color:#7e7e7e;letter-spacing:0.264px;left:1428.30px;">Tegund</span>
<span class="t" id="t182" style="top:589.00px;font-size:15.3px;color:#1f1f1f;letter-spacing:0.520px;left:590.40px;z-index:6;">Innflutningur heppnaðist</span>
<span class="t" id="t183" style="top:702.00px;font-size:15.6px;color:#111;letter-spacing:0.625px;left:987.80px;z-index:6;-webkit-text-stroke:0.45px #111;">Í lagi</span>
</body></html>
